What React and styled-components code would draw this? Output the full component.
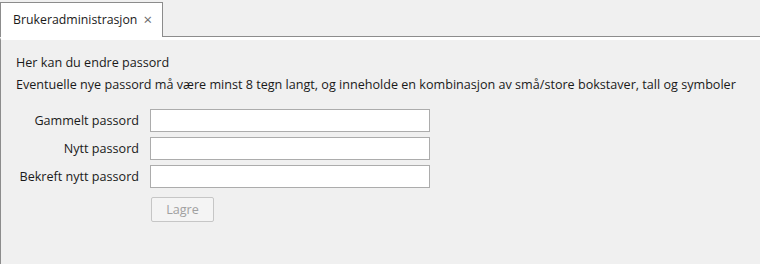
import React from "react"
import styled, { createGlobalStyle } from "styled-components"

const GlobalStyle = createGlobalStyle`
    html, body {
        margin: 0;
        padding: 0;
        background: #f0f0f0;
    }
    body {
        font-family: "Open Sans", "Noto Sans", sans-serif;
        font-size: 12.6px;
        color: #1a1a1a;
    }
`

const fields = ["Gammelt passord", "Nytt passord", "Bekreft nytt passord"]

export default function App() {
    return (
        <>
            <GlobalStyle />
            <Page>
                <TabBar>
                    <Tab>
                        Brukeradministrasjon
                        <Close>×</Close>
                    </Tab>
                    <TabFill />
                </TabBar>
                <Panel>
                    <Intro>Her kan du endre passord</Intro>
                    <Intro>
                        Eventuelle nye passord må være minst 8 tegn langt, og inneholde en kombinasjon av små/store bokstaver, tall og symboler
                    </Intro>
                    <Form>
                        {fields.map((label) => (
                            <Row key={label}>
                                <Label>{label}</Label>
                                <Input type="password" />
                            </Row>
                        ))}
                        <Row>
                            <span />
                            <SaveButton disabled>Lagre</SaveButton>
                        </Row>
                    </Form>
                </Panel>
            </Page>
        </>
    )
}

const Page = styled.div`
    width: 760px;
    height: 264px;
    display: flex;
    flex-direction: column;
    overflow: hidden;
`

const TabBar = styled.div`
    display: flex;
    align-items: flex-end;
    height: 37px;
    padding-top: 2px;
    box-sizing: border-box;
`

const Tab = styled.div`
    display: flex;
    align-items: center;
    height: 35px;
    box-sizing: border-box;
    padding: 0 10px 2px 12px;
    background: #fff;
    border: 1px solid #8c8c8c;
    border-bottom: none;
    white-space: nowrap;
    font-size: 12.3px;
`

const Close = styled.span`
    margin-left: 6px;
    font-size: 15px;
    color: #6a6a6a;
`

const TabFill = styled.div`
    flex: 1;
    align-self: stretch;
    border-bottom: 1px solid #8c8c8c;
`

const Panel = styled.div`
    flex: 1;
    border-top: 3px solid #fff;
    border-left: 1px solid #8c8c8c;
    padding: 12px 0 0 15px;
`

const Intro = styled.div`
    line-height: 22px;
    white-space: nowrap;
`

const Form = styled.div`
    display: grid;
    grid-template-columns: 123px 280px;
    column-gap: 11px;
    row-gap: 5px;
    margin-top: 13px;
`

const Row = styled.div`
    display: contents;
`

const Label = styled.label`
    align-self: center;
    justify-self: end;
    white-space: nowrap;
`

const Input = styled.input`
    height: 23px;
    box-sizing: border-box;
    border: 1px solid #acacac;
    background: #fff;
    outline: none;
`

const SaveButton = styled.button`
    justify-self: start;
    margin-top: 4px;
    margin-left: 1px;
    width: 63px;
    height: 25px;
    border: 1px solid #c6c6c6;
    border-radius: 2px;
    background: #f4f4f4;
    color: #a0a0a0;
    font-family: inherit;
    font-size: 12.6px;
`
